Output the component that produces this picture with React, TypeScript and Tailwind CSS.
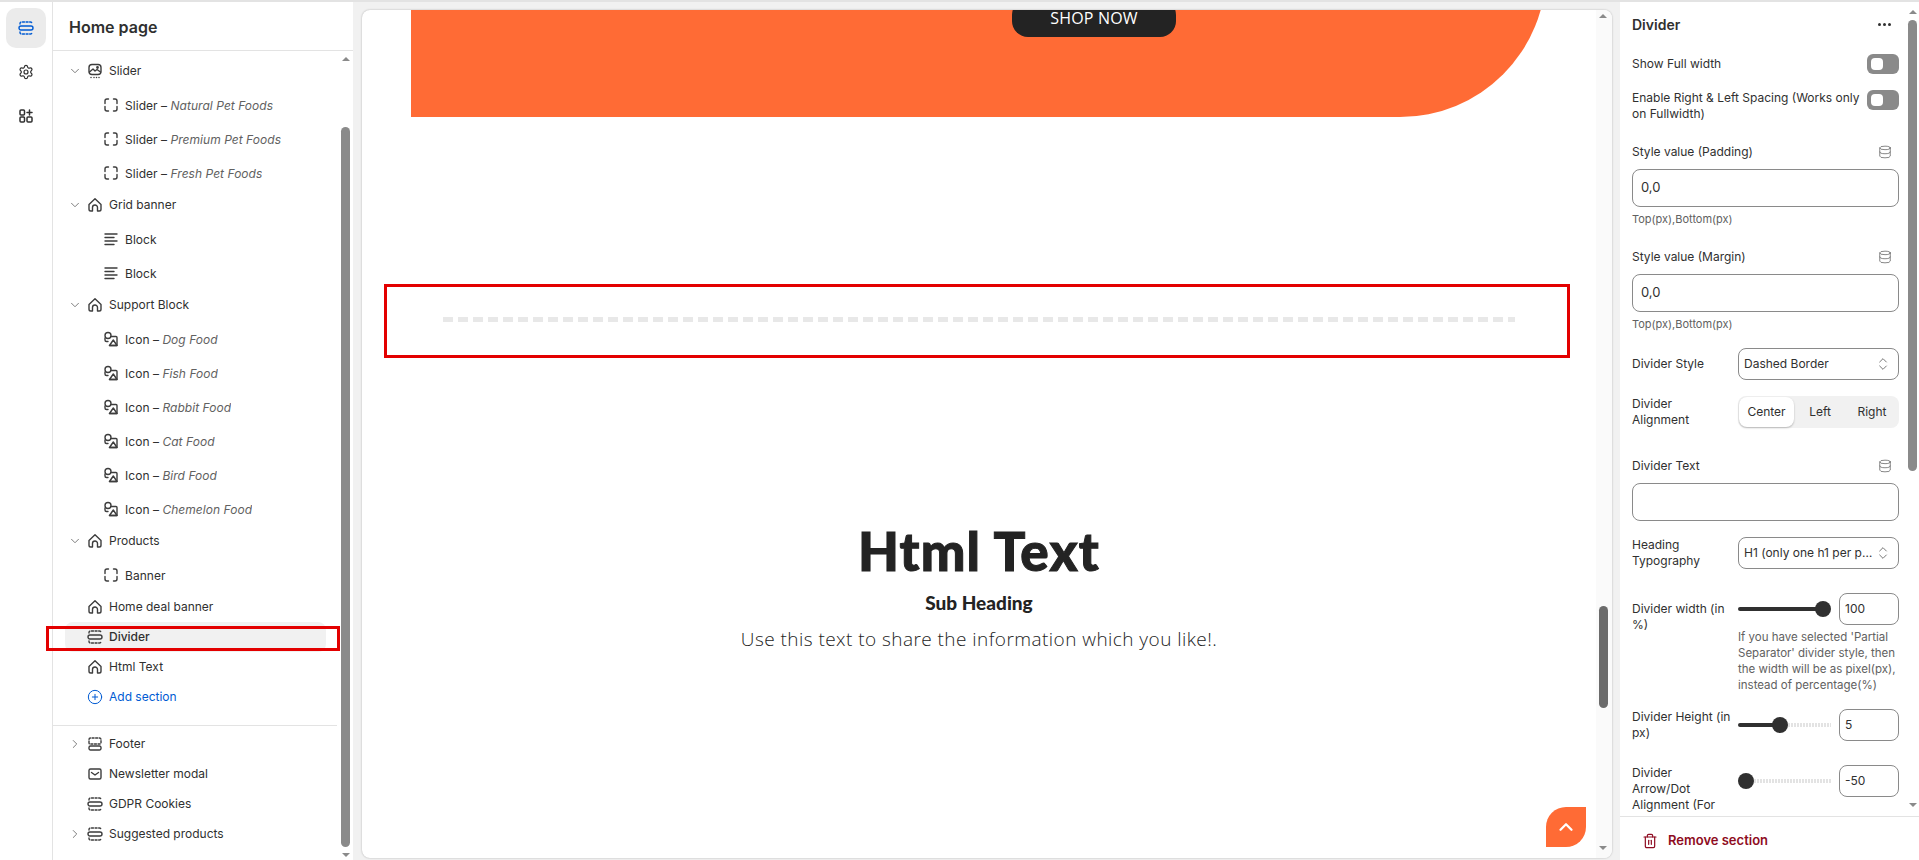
import React from "react";
import { ChevronDown, ChevronRight, Settings, Database, Trash2, ChevronsUpDown, ChevronUp, CirclePlus } from "lucide-react";

const Ic = ({ children }: { children: React.ReactNode }) => (
  <svg width="16" height="16" viewBox="0 0 16 16" fill="none" stroke="#3d3d3d" strokeWidth="1.4" strokeLinecap="round" strokeLinejoin="round" className="shrink-0">{children}</svg>
);
const SectionIcon = () => (
  <Ic>
    <path d="M3 6h10a1.5 1.5 0 0 1 0 4H3a1.5 1.5 0 0 1 0-4z" />
    <path d="M2 4V3.500A1.500 1.500 0 0 1 3.500 2h9A1.500 1.500 0 0 1 14 3.500V4M2 12v.5A1.500 1.500 0 0 0 3.500 14h9a1.500 1.500 0 0 0 1.500-1.500V12" strokeDasharray="2 1.6" />
  </Ic>
);
const FooterIcon = () => (
  <Ic>
    <path d="M3.500 10h9a1.500 1.500 0 0 1 1.500 1.500v1a1.500 1.500 0 0 1-1.500 1.500h-9A1.500 1.500 0 0 1 2 12.500v-1A1.500 1.500 0 0 1 3.500 10z" />
    <path d="M2 7V3.500A1.500 1.500 0 0 1 3.500 2h9A1.500 1.500 0 0 1 14 3.500V7a1 1 0 0 1-1 1H3a1 1 0 0 1-1-1z" strokeDasharray="2 1.6" />
  </Ic>
);
const HomeIcon = () => (
  <Ic>
    <path d="M2 7.500 8 1.800l6 5.700v4.700A1.800 1.800 0 0 1 12.200 14h-1.700v-3.500a2.500 2.500 0 0 0-5 0V14H3.800A1.800 1.800 0 0 1 2 12.200z" />
  </Ic>
);
const SliderIcon = () => (
  <Ic>
    <rect x="2" y="1.500" width="12" height="10" rx="3" />
    <path d="M2.500 9 6 6l2 2 2-1.500 3.500 2.500" />
    <circle cx="10.500" cy="4.500" r=".7" />
    <path d="M4 14.500h.01M7 14.500h.01M9.500 14.500h.01M12 14.500h.01" strokeWidth="1.500" />
  </Ic>
);
const FrameIcon = () => (
  <Ic>
    <path d="M5.500 2H4a2 2 0 0 0-2 2v2.500M10.500 2H12a2 2 0 0 1 2 2v2.500M5.500 14H4a2 2 0 0 1-2-2V9.500M10.500 14H12a2 2 0 0 0 2-2V9.500" />
  </Ic>
);
const LinesIcon = () => (
  <Ic>
    <path d="M2 3h12M2 6.500h9M2 10h12M2 13.500h9" />
  </Ic>
);
const ShapesIcon = () => (
  <Ic>
    <circle cx="5" cy="4.500" r="3" />
    <path d="M5 10.500H3.500A1.500 1.500 0 0 1 2 9V7" />
    <path d="M8 5.500h5a1 1 0 0 1 1 1V14.500H6.500" />
    <path d="M6.500 14.500l3.800-5.500 3.700 5.500z" />
  </Ic>
);

const Sub = ({ icon, name, em }: { icon: React.ReactNode; name: string; em?: string }) => (
  <div className="h-[34px] flex items-center pl-[50px] gap-[6px] text-[#303030] tracking-[0.04px]">
    {icon}
    <span className="truncate pt-[1px]">
      {name}
      {em && <> – <em className="text-[#616161]">{em}</em></>}
    </span>
  </div>
);

const Head = ({ icon, name, arrow, blue }: { icon: React.ReactNode; name: string; arrow?: "d" | "r"; blue?: boolean }) => (
  <div className={`h-[30px] flex items-center pl-[12px] gap-[6px] ${blue ? "text-[#005bd3]" : "text-[#303030]"}`}>
    <span className="w-[20px] shrink-0 flex justify-center text-[#6b6b6b]">
      {arrow === "d" && <ChevronDown size={14} strokeWidth={1.5} />}
      {arrow === "r" && <ChevronRight size={14} strokeWidth={1.5} />}
    </span>
    <span className="-ml-[4px] flex">{icon}</span>
    <span>{name}</span>
  </div>
);

const Toggle = () => (
  <div className="w-[32px] h-[20px] rounded-[6px] bg-[#8a8a8a] flex items-center pl-[4px] shrink-0">
    <div className="w-[12px] h-[12px] rounded-[4px] bg-white" />
  </div>
);

const TextField = ({ label, value, hint }: { label: string; value?: string; hint?: string }) => (
  <div>
    <div className="h-[16px] flex items-center justify-between pr-[7px]">
      <span>{label}</span>
      <Database size={14} strokeWidth={1.3} className="text-[#616161]" />
    </div>
    <div className="mt-[9px] h-[38px] rounded-lg border border-[#8a8a8a] flex items-center px-[8px] text-[#303030] text-[13px]">{value}</div>
    {hint && <div className="mt-[5px] text-[11px] leading-[14px] text-[#616161]">{hint}</div>}
  </div>
);

const Select = ({ value }: { value: string }) => (
  <div className="w-[161px] shrink-0 h-[32px] rounded-lg border border-[#8a8a8a] flex items-center justify-between pl-[5px] pr-[7px] text-[#303030]">
    <span className="truncate">{value}</span>
    <ChevronsUpDown size={16} strokeWidth={1.3} className="text-[#616161] shrink-0" />
  </div>
);

const Slider = ({ pct, value }: { pct: number; value: string }) => (
  <div className="flex items-center flex-1 h-[32px]">
    <div className="w-[93px] h-[16px] flex items-center shrink-0">
      {pct > 0 && <div className="h-[4px] bg-[#303030] rounded-l-full" style={{ width: `${pct}%` }} />}
      <div className="w-[16px] h-[16px] rounded-full bg-[#303030] shrink-0 -ml-[8px] first:ml-0" />
      <div className="flex-1 h-[4px] bg-[repeating-linear-gradient(90deg,#e3e3e3_0_2px,transparent_2px_3px)]" />
    </div>
    <div className="ml-[8px] w-[60px] h-[32px] rounded-lg border border-[#8a8a8a] flex items-center px-[5px] text-[#303030] shrink-0">{value}</div>
  </div>
);

const TriUp = () => <div className="w-0 h-0 border-x-[4px] border-x-transparent border-b-[4px] border-b-[#8a8a8a]" />;
const TriDown = () => <div className="w-0 h-0 border-x-[4px] border-x-transparent border-t-[4px] border-t-[#8a8a8a]" />;

export default function App() {
  return (
    <div className="w-[1919px] h-[860px] overflow-hidden bg-[#f1f1f1] font-['Inter',sans-serif] text-[12px] text-[#303030] flex flex-col">
      <div className="h-[2px] bg-[#e3e3e3] shrink-0" />
      <div className="flex-1 flex min-h-0">
        {/* Rail */}
        <div className="w-[53px] bg-white border-r border-[#e3e3e3] shrink-0 flex flex-col items-center pt-[6px]">
          <div className="w-[40px] h-[40px] rounded-[10px] bg-[#ebebeb] flex items-center justify-center">
            <svg width="16" height="16" viewBox="0 0 16 16" fill="none" stroke="#005bd3" strokeWidth="1.4" strokeLinecap="round">
              <path d="M3 6h10a1.500 1.500 0 0 1 0 4H3a1.500 1.500 0 0 1 0-4z" />
              <path d="M2 4V3.500A1.500 1.500 0 0 1 3.500 2h9A1.500 1.500 0 0 1 14 3.500V4M2 12v.5A1.500 1.500 0 0 0 3.500 14h9a1.500 1.500 0 0 0 1.500-1.500V12" strokeDasharray="2 1.6" />
            </svg>
          </div>
          <div className="mt-[4px] w-[40px] h-[40px] flex items-center justify-center">
            <Settings size={16} strokeWidth={1.8} className="text-[#303030]" />
          </div>
          <div className="mt-[4px] w-[40px] h-[40px] flex items-center justify-center">
            <svg width="16" height="16" viewBox="0 0 16 16" fill="none" stroke="#303030" strokeWidth="1.5" strokeLinejoin="round" strokeLinecap="round">
              <rect x="2" y="2" width="4.500" height="5" rx="1" />
              <rect x="2" y="9" width="4.500" height="5" rx="1" />
              <rect x="9" y="9" width="5" height="5" rx="1" />
              <path d="M11.500 2v5M9 4.500h5" />
            </svg>
          </div>
        </div>

        {/* Sidebar */}
        <div className="w-[300px] bg-white shrink-0 flex flex-col">
          <div className="h-[49px] shrink-0 border-b border-[#e3e3e3] flex items-center pl-[16px] pt-[2px] text-[16px] font-semibold text-[#303030]">Home page</div>
          <div className="flex-1 flex min-h-0">
            <div className="flex-1 min-w-0 pt-[5px]">
              <Head icon={<SliderIcon />} name="Slider" arrow="d" />
              <div className="pt-[2px]">
                <Sub icon={<FrameIcon />} name="Slider" em="Natural Pet Foods" />
                <Sub icon={<FrameIcon />} name="Slider" em="Premium Pet Foods" />
                <Sub icon={<FrameIcon />} name="Slider" em="Fresh Pet Foods" />
              </div>
              <Head icon={<HomeIcon />} name="Grid banner" arrow="d" />
              <div className="pt-[2px]">
                <Sub icon={<LinesIcon />} name="Block" />
                <Sub icon={<LinesIcon />} name="Block" />
              </div>
              <Head icon={<HomeIcon />} name="Support Block" arrow="d" />
              <div className="pt-[2px]">
                <Sub icon={<ShapesIcon />} name="Icon" em="Dog Food" />
                <Sub icon={<ShapesIcon />} name="Icon" em="Fish Food" />
                <Sub icon={<ShapesIcon />} name="Icon" em="Rabbit Food" />
                <Sub icon={<ShapesIcon />} name="Icon" em="Cat Food" />
                <Sub icon={<ShapesIcon />} name="Icon" em="Bird Food" />
                <Sub icon={<ShapesIcon />} name="Icon" em="Chemelon Food" />
              </div>
              <Head icon={<HomeIcon />} name="Products" arrow="d" />
              <div className="pt-[2px]">
                <Sub icon={<FrameIcon />} name="Banner" />
              </div>
              <Head icon={<HomeIcon />} name="Home deal banner" />
              <div className="relative h-[30px] ml-[12px] w-[261px] bg-[#f1f1f1] rounded-lg flex items-center pl-[22px] gap-[6px] font-medium text-[#303030]">
                <SectionIcon />
                <span>Divider</span>
                <div className="absolute -left-[19px] top-[4px] w-[294px] h-[25px] border-[3px] border-[#e30000]" />
              </div>
              <Head icon={<HomeIcon />} name="Html Text" />
              <Head icon={<CirclePlus size={16} strokeWidth={1.5} className="text-[#005bd3]" />} name="Add section" blue />
              <div className="mt-[13px] mb-[3px] h-px bg-[#e3e3e3] mr-[2px]" />
              <Head icon={<FooterIcon />} name="Footer" arrow="r" />
              <Head icon={<Ic><rect x="2" y="3" width="12" height="10" rx="1.500" /><path d="M4.500 6.500 8 9l3.500-2.500" /></Ic>} name="Newsletter modal" />
              <Head icon={<SectionIcon />} name="GDPR Cookies" />
              <Head icon={<SectionIcon />} name="Suggested products" arrow="r" />
            </div>
            <div className="w-[13px] shrink-0 flex flex-col items-center pt-[6px] mr-[1px]">
              <TriUp />
              <div className="mt-[66px] w-[9px] h-[720px] rounded-full bg-[#8a8a8a]" />
              <div className="mt-[6px]"><TriDown /></div>
            </div>
          </div>
        </div>

        {/* Preview */}
        <div className="flex-1 min-w-0 pt-[8px] pl-[9px] pr-[8px] pb-[2px]">
          <div className="h-full rounded-lg bg-white shadow-[0_0_2px_rgba(0,0,0,0.3)] overflow-hidden flex">
            <div className="flex-1 min-w-0 relative">
              <div className="-mt-[60px] ml-[49px] w-[1135px] h-[167px] bg-[#ff6b35] rounded-br-[146px] relative">
                <div className="absolute left-[601px] bottom-[80px] w-[164px] h-[38px] rounded-[16px] bg-[#232323] text-white text-[16px] leading-[16px] font-['Open_Sans',sans-serif] flex items-center justify-center tracking-[0.2px]">SHOP NOW</div>
              </div>
              <div className="mt-[167px] ml-[22px] w-[1186px] h-[74px] border-[3px] border-[#e30000] flex justify-center pt-[30px] pl-[4px]">
                <div className="w-[1072px] h-[5px] bg-[repeating-linear-gradient(90deg,#e8e8e8_0_10px,transparent_10px_15px)]" />
              </div>
              <div className="flex flex-col items-center text-[#232323]">
                <div className="mt-[168px] text-[53px] leading-[50px] font-['Lato',sans-serif] font-black tracking-[1.2px] [-webkit-text-stroke:1px_#232323]">Html Text</div>
                <div className="mt-[15px] text-[19px] leading-[24px] font-['Lato',sans-serif] font-black">Sub Heading</div>
                <div className="mt-[10px] text-[19px] leading-[28px] font-['Open_Sans',sans-serif] font-light tracking-[0.45px]">Use this text to share the information which you like!.</div>
              </div>
              <div className="absolute right-[10px] bottom-[11px] w-[40px] h-[40px] bg-[#ff6b35] rounded-tl-[20px] rounded-br-[20px] flex items-center justify-center text-white">
                <ChevronUp size={22} strokeWidth={2.5} />
              </div>
            </div>
            <div className="w-[16px] pr-[2px] shrink-0 bg-[#fafafa] flex flex-col items-center pt-[4px] pb-[8px]">
              <TriUp />
              <div className="mt-auto w-[9px] h-[102px] rounded-full bg-[#6b6b6b]" />
              <div className="mt-[138px]"><TriDown /></div>
            </div>
          </div>
        </div>

        {/* Settings */}
        <div className="w-[299px] shrink-0 bg-white flex flex-col">
          <div className="flex-1 min-h-0 flex">
            <div className="flex-1 min-w-0 overflow-hidden pl-[12px] pr-[7px]">
              <div className="h-[44px] flex items-center justify-between pr-[8px]">
                <span className="text-[14px] font-semibold">Divider</span>
                <span className="flex gap-[2px]">
                  <i className="w-[3px] h-[3px] rounded-full bg-[#303030]" />
                  <i className="w-[3px] h-[3px] rounded-full bg-[#303030]" />
                  <i className="w-[3px] h-[3px] rounded-full bg-[#303030]" />
                </span>
              </div>
              <div className="mt-[8px] h-[20px] flex items-center justify-between">
                <span>Show Full width</span>
                <Toggle />
              </div>
              <div className="mt-[16px] flex items-start justify-between leading-[16px]">
                <span className="w-[236px]">Enable Right &amp; Left Spacing (Works only on Fullwidth)</span>
                <Toggle />
              </div>
              <div className="mt-[22px]"><TextField label="Style value (Padding)" value="0,0" hint="Top(px),Bottom(px)" /></div>
              <div className="mt-[23px]"><TextField label="Style value (Margin)" value="0,0" hint="Top(px),Bottom(px)" /></div>
              <div className="mt-[17px] flex items-center justify-between">
                <span>Divider Style</span>
                <Select value="Dashed Border" />
              </div>
              <div className="mt-[16px] flex items-center justify-between leading-[16px]">
                <span className="w-[90px]">Divider Alignment</span>
                <div className="w-[161px] h-[32px] rounded-lg bg-[#f1f1f1] flex items-center text-[12px]">
                  <div className="w-[55px] h-[30px] ml-px bg-white rounded-lg shadow-[0_1px_2px_rgba(0,0,0,0.25)] flex items-center justify-center">Center</div>
                  <div className="w-[52px] text-center">Left</div>
                  <div className="w-[52px] text-center">Right</div>
                </div>
              </div>
              <div className="mt-[30px]"><TextField label="Divider Text" /></div>
              <div className="mt-[16px] flex items-center justify-between leading-[16px]">
                <span className="w-[90px]">Heading Typography</span>
                <Select value="H1 (only one h1 per page)" />
              </div>
              <div className="mt-[24px] flex items-start leading-[16px]">
                <span className="w-[106px] shrink-0 pt-[8px]">Divider width (in %)</span>
                <Slider pct={92} value="100" />
              </div>
              <div className="ml-[106px] -mt-[4px] text-[11.5px] leading-[16px] text-[#616161]">If you have selected 'Partial Separator' divider style, then the width will be as pixel(px), instead of percentage(%)</div>
              <div className="mt-[16px] flex items-start leading-[16px]">
                <span className="w-[106px] shrink-0">Divider Height (in px)</span>
                <Slider pct={45} value="5" />
              </div>
              <div className="mt-[24px] flex items-start leading-[16px]">
                <span className="w-[106px] shrink-0 pr-[16px]">Divider Arrow/Dot Alignment (For</span>
                <Slider pct={0} value="-50" />
              </div>
            </div>
            <div className="w-[13px] shrink-0 flex flex-col items-center pt-[8px]">
              <TriUp />
              <div className="mt-[6px] w-[9px] h-[451px] rounded-full bg-[#8a8a8a]" />
              <div className="mt-auto mb-[9px]"><TriDown /></div>
            </div>
          </div>
          <div className="h-[44px] shrink-0 border-t border-[#e3e3e3] flex items-center pt-[5px] pl-[22px] gap-[10px] text-[#8e0b21] text-[13px] font-semibold">
            <Trash2 size={16} strokeWidth={1.8} />
            <span>Remove section</span>
          </div>
        </div>
      </div>
    </div>
  );
}
